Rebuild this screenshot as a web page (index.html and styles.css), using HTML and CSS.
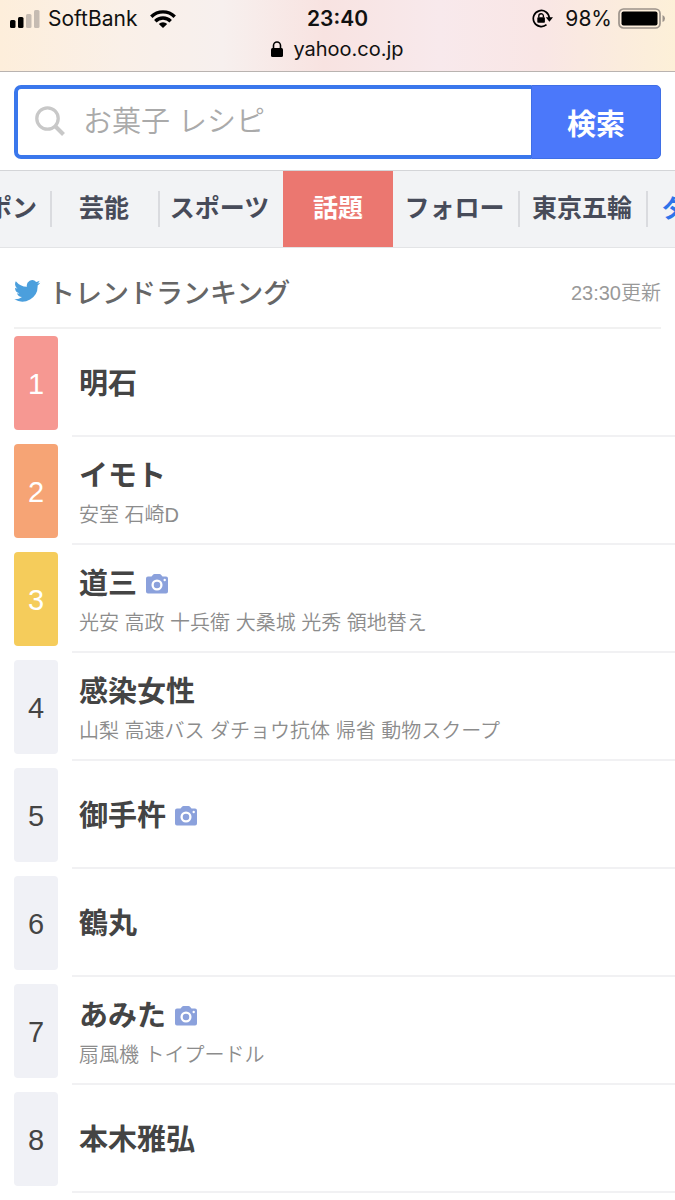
FILE: index.html
```html
<!DOCTYPE html>
<html lang="ja">
<head>
<meta charset="utf-8">
<meta name="viewport" content="width=device-width, initial-scale=1">
<title>トレンドランキング</title>
<link rel="stylesheet" href="styles.css">
</head>
<body>
<svg class="sprite" aria-hidden="true">
  <symbol id="camera" viewBox="0 0 22 20">
    <path fill="#8ba1dc" d="M2 2.500h3.500L7 .8Q7.500 0 8.500 0h5q1 0 1.500.8l1.500 1.700H20q2 0 2 2v13q0 2-2 2H2q-2 0-2-2v-13q0-2 2-2z"/>
    <circle cx="11" cy="11" r="4.400" fill="none" stroke="#fff" stroke-width="2.300"/>
    <circle cx="18.700" cy="6" r="1.200" fill="#fff"/>
  </symbol>
</svg>
<header class="browser">
  <div class="status">
    <div class="status-side">
      <svg class="signal" width="30" height="18" viewBox="0 0 30 18" aria-hidden="true">
        <rect y="10" width="5.500" height="8" rx="1.500"/><rect x="8" y="7" width="5.500" height="11" rx="1.500"/>
        <rect x="16" y="4" width="5.500" height="14" rx="1.500" fill="#c5bbb2"/><rect x="24" width="5.500" height="18" rx="1.500" fill="#c5bbb2"/>
      </svg>
      <span class="carrier">SoftBank</span>
      <svg class="wifi" width="26" height="18" viewBox="0 0 26 18" aria-hidden="true">
        <g fill="none" stroke="#000" stroke-width="3.400"><path d="M1.300 6.700a16.500 16.500 0 0 1 23.400 0"/><path d="M5.300 11.200a11 11 0 0 1 15.400 0"/></g>
        <path d="M13 18l-4.200-4.100a6 6 0 0 1 8.400 0z"/>
      </svg>
    </div>
    <time class="clock">23:40</time>
    <div class="status-side status-right">
      <svg class="rotation" width="21" height="19" viewBox="0 0 21 19" aria-hidden="true">
        <path d="M14.500 15.600A8 8 0 1 1 17.300 9" fill="none" stroke="#000" stroke-width="1.700"/>
        <path d="M13.800 8.200H21l-3.600 4.600z"/>
        <rect x="5.300" y="8.200" width="7.600" height="5.600" rx=".8"/>
        <path d="M6.800 8.500V7a2.300 2.300 0 0 1 4.600 0v1.500" fill="none" stroke="#000" stroke-width="1.400"/>
      </svg>
      <span class="percent">98%</span>
      <svg class="battery" width="47" height="21" viewBox="0 0 47 21" aria-hidden="true">
        <rect x="1" y="1" width="41" height="19" rx="4.500" fill="none" stroke="#9c938b" stroke-width="1.700"/>
        <rect x="3.500" y="3.500" width="36" height="14" rx="2"/><path d="M44.500 7q2.500 1 2.500 3.500T44.500 14z" fill="#9c938b"/>
      </svg>
    </div>
  </div>
  <div class="address">
    <svg width="12" height="16" viewBox="0 0 12 16" aria-hidden="true"><rect y="7" width="12" height="9" rx="1.500"/><path d="M2.500 8V4.500a3.500 3.500 0 0 1 7 0V8" fill="none" stroke="#000" stroke-width="1.600"/></svg>
    <span>yahoo.co.jp</span>
  </div>
</header>
<form class="search" role="search">
  <label class="field">
    <svg width="32" height="32" viewBox="0 0 32 32" fill="none" stroke="#c8c8c8" aria-hidden="true"><circle cx="12.500" cy="12.500" r="10.700" stroke-width="3.300"/><path d="M20.500 20.500l8 8" stroke-width="4"/></svg>
    <input type="search" aria-label="検索キーワード" placeholder="お菓子 レシピ">
  </label>
  <button type="submit">検索</button>
</form>
<nav class="tabs">
  <a class="tab cut-left" href="#">ポン</a>
  <a class="tab" href="#">芸能</a>
  <a class="tab no-rule" href="#">スポーツ</a>
  <a class="tab current no-rule" href="#" aria-current="page">話題</a>
  <a class="tab" href="#">フォロー</a>
  <a class="tab" href="#">東京五輪</a>
  <a class="tab cut-right no-rule" href="#">ダ</a>
</nav>
<main>
  <div class="heading">
    <svg width="27" height="22" viewBox="0 0 24 20" aria-hidden="true"><path fill="#4b9fdd" d="M23.600 2.500a9.700 9.700 0 0 1-2.800.8A4.900 4.900 0 0 0 23 .6a9.800 9.800 0 0 1-3.100 1.200 4.900 4.900 0 0 0-8.400 4.400A13.900 13.900 0 0 1 1.400 1.100a4.900 4.900 0 0 0 1.500 6.600 4.900 4.900 0 0 1-2.200-.6v.1a4.900 4.900 0 0 0 3.900 4.800 4.900 4.900 0 0 1-2.200.1 4.900 4.900 0 0 0 4.600 3.400A9.900 9.900 0 0 1 0 17.500 13.900 13.900 0 0 0 21.200 5.100a10 10 0 0 0 2.400-2.600z"/></svg>
    <h1>トレンドランキング</h1>
    <span class="updated">23:30更新</span>
  </div>
  <ol class="ranking">
    <li><span class="rank first">1</span><a class="entry" href="#"><span class="name">明石</span></a></li>
    <li><span class="rank second">2</span><a class="entry" href="#"><span class="name">イモト</span><span class="related">安室 石崎D</span></a></li>
    <li><span class="rank third">3</span><a class="entry" href="#"><span class="name">道三<svg class="camera" role="img" aria-label="画像あり"><use href="#camera"/></svg></span><span class="related">光安 高政 十兵衛 大桑城 光秀 領地替え</span></a></li>
    <li><span class="rank">4</span><a class="entry" href="#"><span class="name">感染女性</span><span class="related">山梨 高速バス ダチョウ抗体 帰省 動物スクープ</span></a></li>
    <li><span class="rank">5</span><a class="entry" href="#"><span class="name">御手杵<svg class="camera" role="img" aria-label="画像あり"><use href="#camera"/></svg></span></a></li>
    <li><span class="rank">6</span><a class="entry" href="#"><span class="name">鶴丸</span></a></li>
    <li><span class="rank">7</span><a class="entry" href="#"><span class="name">あみた<svg class="camera" role="img" aria-label="画像あり"><use href="#camera"/></svg></span><span class="related">扇風機 トイプードル</span></a></li>
    <li><span class="rank">8</span><a class="entry" href="#"><span class="name">本木雅弘</span></a></li>
  </ol>
</main>
</body>
</html>
```
FILE: styles.css
```css
* { box-sizing: border-box; }
body {
  margin: 0;
  background: #fff;
  color: #444;
  font-family: "Liberation Sans", "Noto Sans CJK JP", sans-serif;
}
a { color: inherit; text-decoration: none; }
svg { flex: none; }
.sprite { display: none; }

.browser {
  height: 72px;
  padding: 3px 10px 0;
  border-bottom: 1px solid #b9b3b0;
  background: linear-gradient(90deg, #fdeedb 0%, #faf0e8 18%, #f7f0ee 33%, #f8e3e1 48%, #f8e9ec 65%, #f9e6e5 80%, #fbecdd 92%, #fdf0d8 100%);
  color: #111;
  font-family: Inter, sans-serif;
  font-size: 21px;
}
.status {
  display: grid;
  grid-template-columns: 1fr auto 1fr;
  align-items: center;
  height: 31px;
}
.status-side { display: flex; align-items: center; }
.status-right { justify-content: flex-end; }
.carrier { margin: 0 13px 0 8px; }
.clock { font-weight: 600; }
.percent { margin: 0 6px 0 12px; }
.address {
  display: flex;
  align-items: center;
  justify-content: center;
  gap: 10px;
  height: 30px;
  font-size: 20px;
}

.search { display: flex; height: 98px; padding: 13px 14px 11px; }
.field {
  display: flex;
  flex: 1;
  align-items: center;
  gap: 16px;
  min-width: 0;
  padding-left: 17px;
  border: 4px solid #3a77ec;
  border-right: 0;
  border-radius: 7px 0 0 7px;
}
.field input {
  flex: 1;
  min-width: 0;
  height: 60px;
  padding: 0;
  border: 0;
  outline: 0;
  background: transparent;
  color: #444;
  font: 350 29px "Liberation Sans", "Noto Sans CJK JP", sans-serif;
}
.field input::placeholder { color: #aaa; }
.search button {
  width: 130px;
  border: 1px solid #3f6fe6;
  border-radius: 0 5px 5px 0;
  background: #4b78fa;
  color: #fff;
  font: 700 29px "Noto Sans CJK JP", sans-serif;
}

.tabs {
  display: grid;
  grid-template-columns: 52fr 108fr 123fr 110fr 127fr 128fr 27fr;
  height: 78px;
  overflow: hidden;
  border-top: 1px solid #d4d5d8;
  border-bottom: 1px solid #e3e4e6;
  background: #f2f3f5;
  color: #474b59;
  font-size: 25px;
  font-weight: 700;
}
.tab {
  position: relative;
  display: flex;
  align-items: center;
  justify-content: center;
  min-width: 0;
  padding: 0 4px 6px 0;
  white-space: nowrap;
}
.tab::after {
  position: absolute;
  top: 20px;
  right: 0;
  width: 2px;
  height: 36px;
  background: #dadbdf;
  content: "";
}
.tab.cut-left { justify-content: flex-end; padding-right: 15px; }
.tab.cut-right { justify-content: flex-start; padding-left: 14px; color: #2f73ea; }
.tab.current { padding-right: 0; background: #eb7770; color: #fff; }
.tab.no-rule::after { display: none; }

.heading {
  display: flex;
  align-items: center;
  height: 81px;
  margin: 0 14px;
  padding-top: 7px;
  border-bottom: 2px solid #f1f1f1;
}
h1 { flex: 1; margin: 0 0 0 7px; color: #666; font-size: 27px; font-weight: 500; }
.updated { color: #999; font-size: 20px; font-weight: 350; }

.ranking { margin: 0; padding: 0; list-style: none; }
.ranking li { display: flex; gap: 14px; padding-left: 14px; }
.rank {
  display: grid;
  place-items: center;
  width: 44px;
  height: 94px;
  margin: 7px 0;
  padding-top: 2px;
  border-radius: 4px;
  background: #f0f1f6;
  color: #444;
  font-size: 29px;
}
.rank.first { background: #f69892; color: #fff; }
.rank.second { background: #f6a475; color: #fff; }
.rank.third { background: #f5cc5b; color: #fff; }
.entry {
  display: flex;
  flex: 1;
  flex-direction: column;
  justify-content: center;
  padding: 3px 7px 0;
  border-bottom: 2px solid #f1f1f3;
}
.name {
  display: flex;
  align-items: center;
  gap: 9px;
  font-size: 29px;
  font-weight: 700;
  line-height: 46px;
}
.camera { width: 22px; height: 20px; }
.related { color: #8c8c8c; font-size: 20px; font-weight: 350; line-height: 32px; }
```
